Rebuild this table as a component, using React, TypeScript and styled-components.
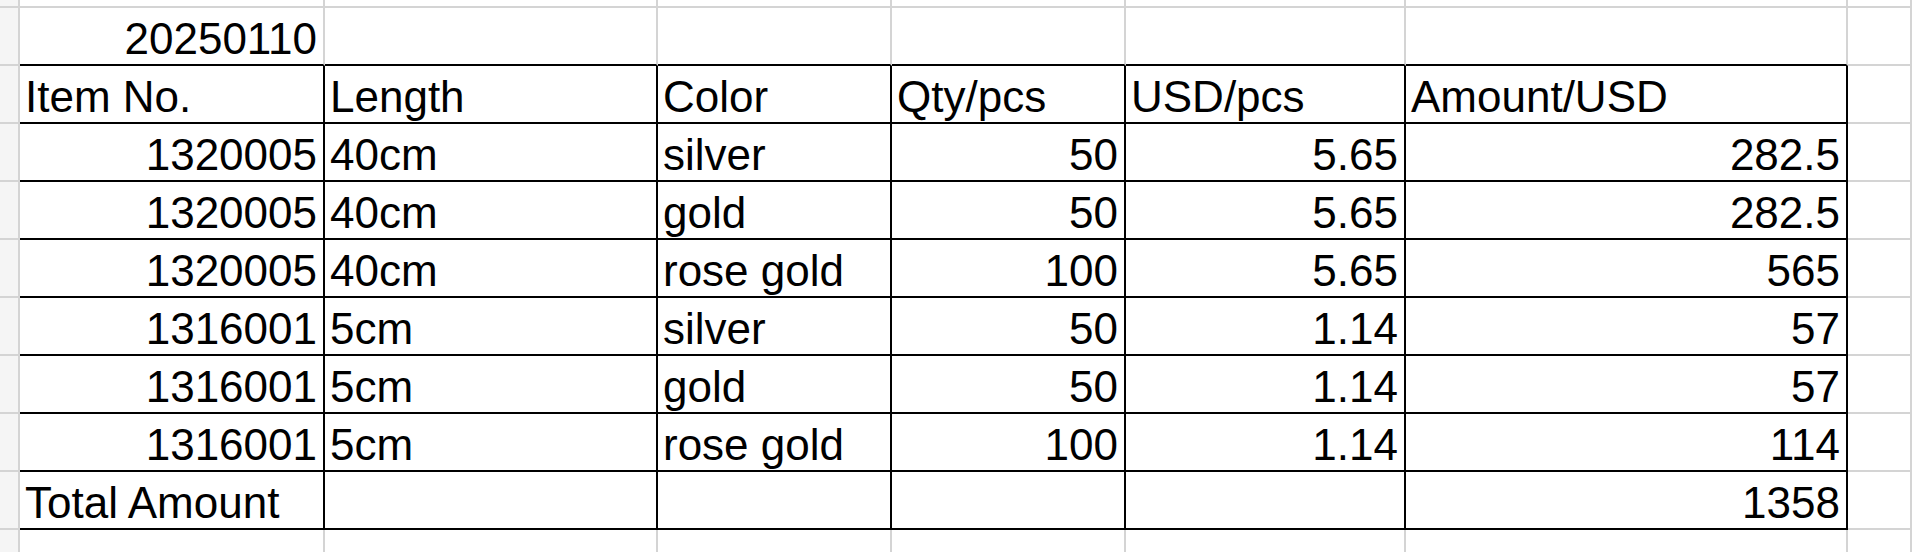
import React from "react";
import styled, { createGlobalStyle } from "styled-components";

const GlobalStyle = createGlobalStyle`
  html, body {
    margin: 0;
    padding: 0;
    background: #fff;
    overflow: hidden;
  }
  body {
    font-family: "Liberation Sans", Arial, sans-serif;
  }
`;

// column widths of A..F, as the spreadsheet has them
const COLS = [305, 333, 234, 234, 280, 442];
const GRID = "#d4d4d4";
const INK = "#000";

const rows: string[][] = [
  ["", "", "", "", "", ""],
  ["20250110", "", "", "", "", ""],
  ["Item No.", "Length", "Color", "Qty/pcs", "USD/pcs", "Amount/USD"],
  ["1320005", "40cm", "silver", "50", "5.65", "282.5"],
  ["1320005", "40cm", "gold", "50", "5.65", "282.5"],
  ["1320005", "40cm", "rose gold", "100", "5.65", "565"],
  ["1316001", "5cm", "silver", "50", "1.14", "57"],
  ["1316001", "5cm", "gold", "50", "1.14", "57"],
  ["1316001", "5cm", "rose gold", "100", "1.14", "114"],
  ["Total Amount", "", "", "", "", "1358"],
  ["", "", "", "", "", ""],
];

const isNumber = (v: string) => /^\d+(\.\d+)?$/.test(v);

const Sheet = styled.div`
  display: grid;
  grid-template-columns: 20px ${COLS.map((w) => `${w}px`).join(" ")} 1fr;
  grid-template-rows: 8px repeat(10, 58px);
  height: 552px;
  overflow: hidden;
`;

const Cell = styled.div<{ $num?: boolean; $right?: boolean; $bottom?: boolean }>`
  box-sizing: border-box;
  display: flex;
  align-items: flex-end;
  justify-content: ${(p) => (p.$num ? "flex-end" : "flex-start")};
  padding: 0 6px 1px 5px;
  border-right: 2px solid ${(p) => (p.$right ? INK : GRID)};
  border-bottom: 2px solid ${(p) => (p.$bottom ? INK : GRID)};
  font-size: 44px;
  line-height: 48px;
  color: #000;
  white-space: nowrap;
  overflow: hidden;
`;

const RowHead = styled(Cell)`
  background: #f5f5f5;
  padding: 0;
`;

export default function App() {
  return (
    <>
      <GlobalStyle />
      <Sheet>
        {rows.map((row, r) => {
          // the bordered table spans rows 2..9 (index), header line under row 1
          const inTable = r >= 2 && r <= 9;
          const bottomBlack = r >= 1 && r <= 9;
          return (
            <React.Fragment key={r}>
              <RowHead />
              {row.map((value, c) => (
                <Cell
                  key={c}
                  $num={isNumber(value)}
                  $right={inTable}
                  $bottom={bottomBlack}
                >
                  {value}
                </Cell>
              ))}
              <Cell />
            </React.Fragment>
          );
        })}
      </Sheet>
    </>
  );
}
